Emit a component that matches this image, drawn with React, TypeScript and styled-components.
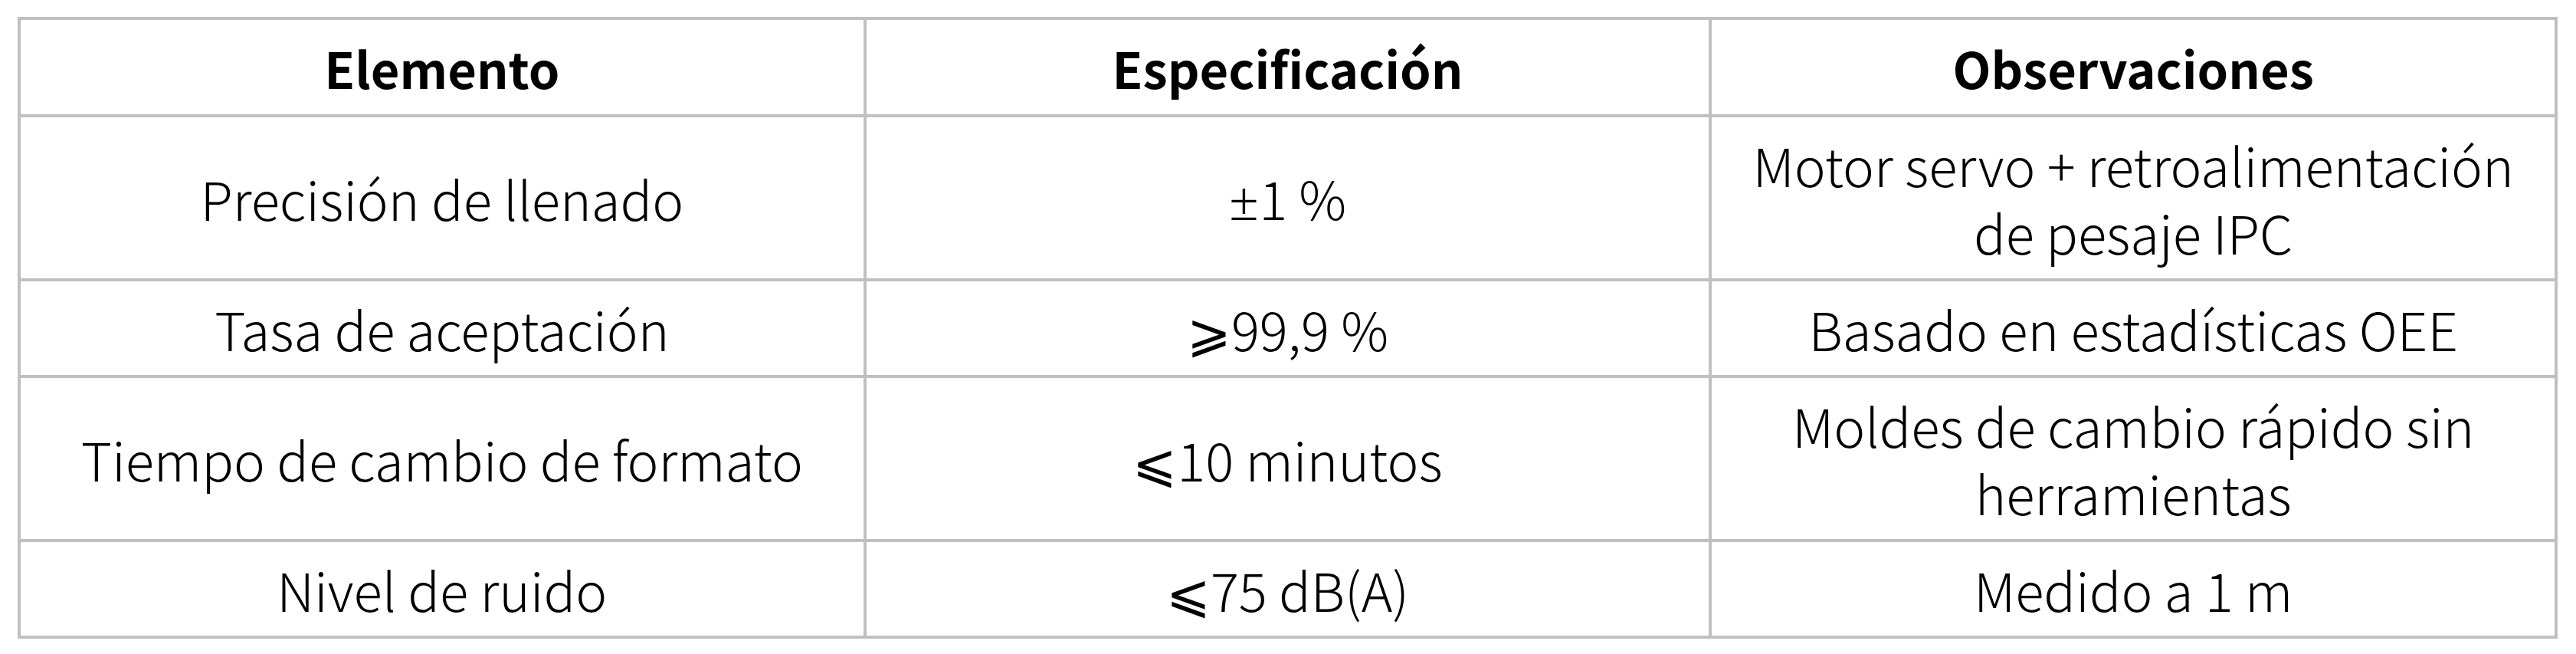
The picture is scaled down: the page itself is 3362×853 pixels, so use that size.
import React from 'react';
import styled, { createGlobalStyle } from 'styled-components';

type Row = {
  element: string;
  sign: string;
  spec: string;
  note: string;
};

const rows: Row[] = [
  { element: 'Precisión de llenado', sign: '±', spec: '1 %', note: 'Motor servo + retroalimentación de pesaje IPC' },
  { element: 'Tasa de aceptación', sign: '⩾', spec: '99,9 %', note: 'Basado en estadísticas OEE' },
  { element: 'Tiempo de cambio de formato', sign: '⩽', spec: '10 minutos', note: 'Moldes de cambio rápido sin herramientas' },
  { element: 'Nivel de ruido', sign: '⩽', spec: '75 dB(A)', note: 'Medido a 1 m' },
];

const App: React.FC = () => {
  return (
    <Page>
      <GlobalStyle />
      <SpecTable>
        <thead>
          <tr>
            <HeadCell>Elemento</HeadCell>
            <HeadCell>Especificación</HeadCell>
            <HeadCell>Observaciones</HeadCell>
          </tr>
        </thead>
        <tbody>
          {rows.map((row) => (
            <tr key={row.element}>
              <Cell>{row.element}</Cell>
              <Cell>
                <Sign $latin={row.sign === '±'}>{row.sign}</Sign>
                {row.spec}
              </Cell>
              <Cell>{row.note}</Cell>
            </tr>
          ))}
        </tbody>
      </SpecTable>
    </Page>
  );
};

export default App;

const GlobalStyle = createGlobalStyle`
  html, body {
    margin: 0;
    padding: 0;
    background: #ffffff;
  }
`;

const Page = styled.div`
  padding: 22px 0 0 23px;
  font-family: "Noto Sans CJK SC", "Noto Sans", sans-serif;
  color: #000000;
`;

const SpecTable = styled.table`
  width: 3315px;
  table-layout: fixed;
  border-collapse: separate;
  border-spacing: 0;
  border-top: 4px solid #c0c0c0;
  border-left: 4px solid #c0c0c0;
`;

const HeadCell = styled.th`
  height: 123px;
  padding: 0 16px;
  border-right: 4px solid #c0c0c0;
  border-bottom: 4px solid #c0c0c0;
  font-size: 65px;
  font-weight: 700;
  line-height: 88px;
  text-align: center;
  vertical-align: middle;
`;

const Cell = styled.td`
  padding: 17px 16px;
  border-right: 4px solid #c0c0c0;
  border-bottom: 4px solid #c0c0c0;
  font-size: 69px;
  font-weight: 300;
  line-height: 88px;
  text-align: center;
  vertical-align: middle;
`;

const Sign = styled.span<{ $latin: boolean }>`
  font-family: ${(p) => (p.$latin ? '"Noto Sans", sans-serif' : 'inherit')};
`;
